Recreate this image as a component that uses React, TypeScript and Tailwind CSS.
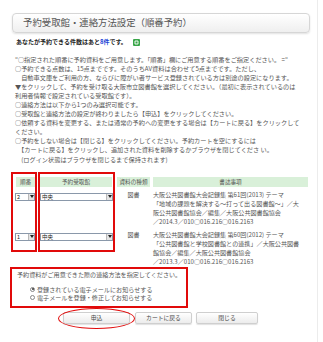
import React from "react";

function Sel({ value, widthClass }: { value: string; widthClass: string }) {
  return (
    <div className={`flex h-[8px] items-stretch border border-[#8a98aa] bg-white ${widthClass}`}>
      <div className="flex-1 pl-[1px] text-[5.5px] leading-[6px] text-[#222]">{value}</div>
      <div className="flex w-[6px] items-center justify-center border-l border-[#b9b9b9] bg-[#e4e4e4]">
        <svg width="4" height="3" viewBox="0 0 4 3">
          <path d="M0 0 L4 0 L2 3 Z" fill="#222" />
        </svg>
      </div>
    </div>
  );
}

const intro = [
  "\"○指定された順番に予約資料をご用意します。「順番」欄にご用意する順番をご指定ください。 =\"",
  "○予約できる点数は、15点までです。そのうちAV資料は合わせて5点までです。ただし、",
  "　自動車文庫をご利用の方、ならびに障がい者サービス登録されている方は別途の設定になります。",
  "▼をクリックして、予約を受け取る大阪市立図書館を選択してください。（最初に表示されているのは",
  "利用者情報で設定されている受取館です）。",
  "○連絡方法は以下から1つのみ選択可能です。",
  "○受取館と連絡方法の設定が終わりましたら【申込】をクリックしてください。",
  "○依頼する資料を変更する、または通常の予約への変更をする場合は【カートに戻る】をクリックして",
  "ください。",
  "○予約をしない場合は【閉じる】をクリックしてください。予約カートを空にするには",
  "　【カートに戻る】をクリックし、追加された資料を削除するかブラウザを閉じてくださ い。",
  "　(ログイン状態はブラウザを閉じるまで保持されます)",
];

const rows = [
  {
    order: "2",
    lines: [
      "大阪公共図書館大会記録集 第61回(2013) テーマ",
      "「地域の課題を解決する～打って出る図書館～」／大",
      "阪公共図書館協会／編集／大阪公共図書館協会",
      "／2014.3／010○016.216○016.2163",
    ],
  },
  {
    order: "1",
    lines: [
      "大阪公共図書館大会記録集 第60回(2012) テーマ",
      "「公共図書館と学校図書館との連携」／大阪公共図書",
      "館協会／編集／大阪公共図書館協会",
      "／2013.3／010○016.216○016.2163",
    ],
  },
];

function Btn({ label, widthClass }: { label: string; widthClass: string }) {
  return (
    <div
      className={`flex h-[12px] items-center justify-center rounded-[2px] border border-[#cfcfcf] bg-gradient-to-b from-white to-[#ececec] text-[5.8px] text-[#444] shadow-[0_1px_1px_rgba(0,0,0,0.12)] ${widthClass}`}
    >
      {label}
    </div>
  );
}

export default function App() {
  return (
    <div className="relative h-[342px] w-[323px] overflow-hidden bg-white font-['Noto_Sans_CJK_JP',sans-serif] text-[#444]">
      {/* page right border */}
      <div className="absolute right-[5px] top-0 h-full w-px bg-[#ececec]" />

      <div className="flex flex-col">
        {/* title */}
        <div className="ml-[12px] mt-[13px] flex h-[20px] w-[298px] items-center rounded-[4px] border border-[#d6d6d6] bg-gradient-to-b from-white to-[#efefef] pl-[10px] shadow-[0_1px_2px_rgba(0,0,0,0.12)]">
          <span className="text-[9.4px] leading-none text-[#555]">予約受取館・連絡方法設定（順番予約）</span>
        </div>

        {/* count line */}
        <div className="mt-[5px] flex h-[8px] items-center pl-[16px] text-[6px] font-bold leading-[8px] text-[#222]">
          <span>あなたが予約できる件数はあと</span>
          <span className="text-[#1a3fd6]">8件</span>
          <span>です。</span>
          <span className="ml-[6px] flex h-[7px] w-[7px] items-center justify-center rounded-[1px] bg-[#3aa64a]">
            <svg width="5" height="5" viewBox="0 0 5 5">
              <path d="M1 1 H4 V4 H1 Z" fill="none" stroke="#fff" strokeWidth="0.9" />
            </svg>
          </span>
        </div>

        {/* intro text */}
        <div className="mt-[8.5px] flex flex-col pl-[15px] text-[6.2px] leading-[9.1px] text-[#555]">
          {intro.map((l, i) => (
            <div key={i} className="whitespace-pre">
              {l}
            </div>
          ))}
        </div>

        {/* table */}
        <div className="mt-[13px] flex flex-col pl-[16px]">
          <div className="flex h-[10px] text-[5.6px] leading-[10px] text-[#555]">
            <div className="w-[19px] bg-[#d9f0d9] text-center">順番</div>
            <div className="ml-[5px] w-[72px] bg-[#d9f0d9] text-center">予約受取館</div>
            <div className="ml-[5px] w-[33px] bg-[#d9f0d9] text-center">資料の種類</div>
            <div className="ml-[3px] w-[155px] bg-[#d9f0d9] text-center">書誌事項</div>
          </div>
          {rows.map((r, i) => (
            <div key={i} className={`flex ${i === 0 ? "mt-[3.5px]" : "mt-[4px]"}`}>
              <div className="-ml-[1px] w-[20px] pt-[2.5px]">
                <Sel value={r.order} widthClass="w-[20px]" />
              </div>
              <div className="ml-[5px] w-[72px] pt-[2.5px]">
                <Sel value="中央" widthClass="w-[73px]" />
              </div>
              <div className="ml-[5px] w-[33px] text-center text-[6px] leading-[9px] text-[#555]">図書</div>
              <div className="ml-[3px] flex w-[155px] flex-col text-[6.1px] leading-[9px] text-[#555]">
                {r.lines.map((l, j) => (
                  <div key={j} className="whitespace-pre">
                    {l}
                  </div>
                ))}
              </div>
            </div>
          ))}
        </div>

        {/* contact method */}
        <div className="mt-[4px] flex flex-col pl-[17px] text-[6.1px] text-[#555]">
          <div className="leading-[9px]">予約資料がご用意できた際の連絡方法を指定してください。</div>
          <div className="mt-[6px] flex h-[8px] items-center pl-[13px]">
            <span className="mr-[2px] flex h-[5px] w-[5px] items-center justify-center rounded-full border border-[#888] bg-white">
              <span className="h-[2px] w-[2px] rounded-full bg-[#333]" />
            </span>
            <span>登録されている電子メールにお知らせする</span>
          </div>
          <div className="flex h-[8px] items-center pl-[13px]">
            <span className="mr-[2px] h-[5px] w-[5px] rounded-full border border-[#888] bg-white" />
            <span>電子メールを登録・修正してお知らせする</span>
          </div>
        </div>

        {/* buttons */}
        <div className="mt-[11px] flex pl-[63px]">
          <Btn label="申込" widthClass="w-[67px]" />
          <Btn label="カートに戻る" widthClass="ml-[5px] w-[57px]" />
          <Btn label="閉じる" widthClass="ml-[4px] w-[62px]" />
        </div>
      </div>

      {/* red annotation marks */}
      <div className="pointer-events-none absolute left-[11px] top-[172px] h-[80px] w-[26px] border-2 border-[#e10a0a]" />
      <div className="pointer-events-none absolute left-[38px] top-[172px] h-[80px] w-[77px] border-2 border-[#e10a0a]" />
      <div className="pointer-events-none absolute left-[10px] top-[267px] h-[41px] w-[178px] border-2 border-[#e10a0a]" />
      <div className="pointer-events-none absolute left-[58px] top-[308px] h-[21px] w-[77px] rounded-[50%] border-[1.5px] border-[#e10a0a]" />
    </div>
  );
}
